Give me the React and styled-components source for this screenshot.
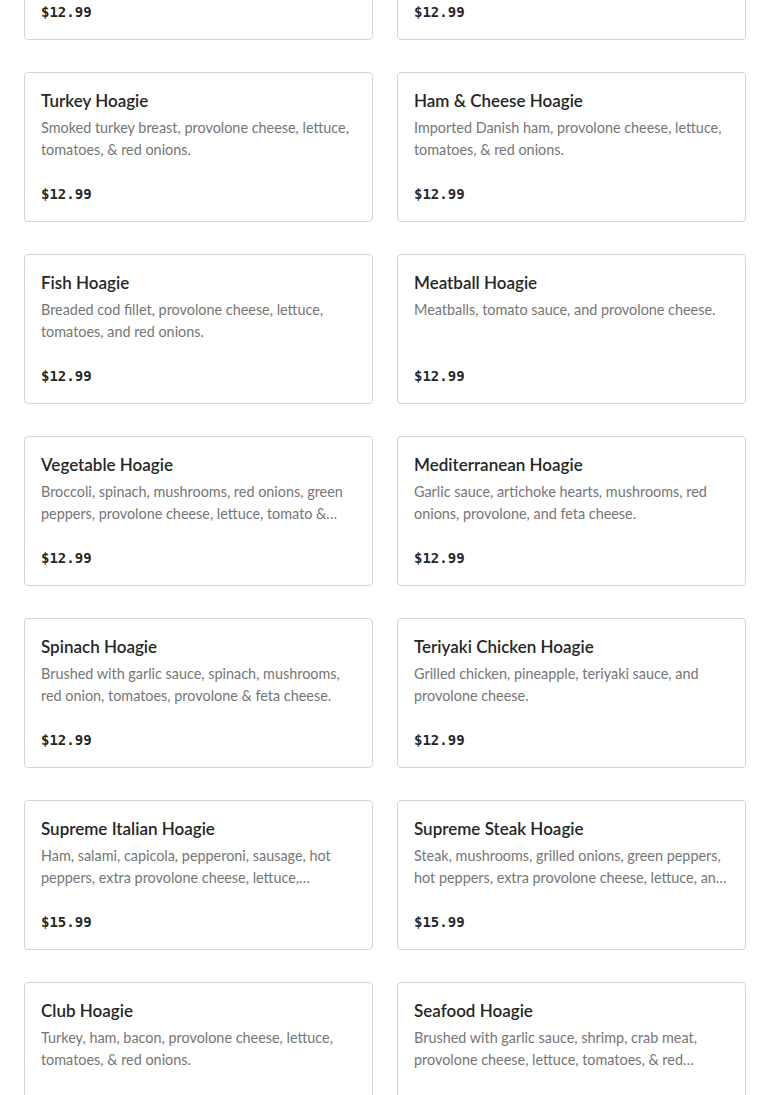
import styled, { createGlobalStyle } from "styled-components";

const GlobalStyle = createGlobalStyle`
  html, body {
    margin: 0;
    padding: 0;
    background: #ffffff;
    overflow: hidden;
  }
  body {
    font-family: Lato, "Noto Sans", sans-serif;
  }
`;

const Page = styled.div`
  width: 770px;
  height: 1095px;
  overflow: hidden;
`;

const MenuGrid = styled.div`
  display: grid;
  grid-template-columns: repeat(2, 349px);
  column-gap: 24px;
  row-gap: 32px;
  padding: 0 24px;
  margin-top: -110px;
`;

const Card = styled.div`
  box-sizing: border-box;
  height: 150px;
  border: 1px solid #d4d4d4;
  border-radius: 4px;
  padding: 16px;
  display: flex;
  flex-direction: column;
  background: #fff;
`;

const Title = styled.div`
  font-size: 17px;
  line-height: 24px;
  font-weight: 600;
  color: #262626;
`;

const Description = styled.div`
  margin-top: 4px;
  font-size: 14.4px;
  line-height: 22px;
  height: 44px;
  color: #767676;
  display: -webkit-box;
  -webkit-line-clamp: 2;
  -webkit-box-orient: vertical;
  overflow: hidden;
`;

const Price = styled.div`
  margin-top: 22px;
  font-family: "DejaVu Sans Mono", "Liberation Mono", monospace;
  font-size: 14px;
  line-height: 22px;
  font-weight: 700;
  color: #262626;
`;

const items = [
  { name: "Italian Hoagie", desc: "Ham, salami, capicola, provolone cheese, lettuce, tomatoes, & red onions.", price: "$12.99" },
  { name: "Cheesesteak Hoagie", desc: "Steak, provolone cheese, lettuce, tomatoes, & red onions.", price: "$12.99" },
  { name: "Turkey Hoagie", desc: "Smoked turkey breast, provolone cheese, lettuce, tomatoes, & red onions.", price: "$12.99" },
  { name: "Ham & Cheese Hoagie", desc: "Imported Danish ham, provolone cheese, lettuce, tomatoes, & red onions.", price: "$12.99" },
  { name: "Fish Hoagie", desc: "Breaded cod fillet, provolone cheese, lettuce, tomatoes, and red onions.", price: "$12.99" },
  { name: "Meatball Hoagie", desc: "Meatballs, tomato sauce, and provolone cheese.", price: "$12.99" },
  { name: "Vegetable Hoagie", desc: "Broccoli, spinach, mushrooms, red onions, green peppers, provolone cheese, lettuce, tomato & onions.", price: "$12.99" },
  { name: "Mediterranean Hoagie", desc: "Garlic sauce, artichoke hearts, mushrooms, red onions, provolone, and feta cheese.", price: "$12.99" },
  { name: "Spinach Hoagie", desc: "Brushed with garlic sauce, spinach, mushrooms, red onion, tomatoes, provolone & feta cheese.", price: "$12.99" },
  { name: "Teriyaki Chicken Hoagie", desc: "Grilled chicken, pineapple, teriyaki sauce, and provolone cheese.", price: "$12.99" },
  { name: "Supreme Italian Hoagie", desc: "Ham, salami, capicola, pepperoni, sausage, hot peppers, extra provolone cheese, lettuce, tomatoes, & red onions.", price: "$15.99" },
  { name: "Supreme Steak Hoagie", desc: "Steak, mushrooms, grilled onions, green peppers, hot peppers, extra provolone cheese, lettuce, and tomatoes.", price: "$15.99" },
  { name: "Club Hoagie", desc: "Turkey, ham, bacon, provolone cheese, lettuce, tomatoes, & red onions.", price: "$12.99" },
  { name: "Seafood Hoagie", desc: "Brushed with garlic sauce, shrimp, crab meat, provolone cheese, lettuce, tomatoes, & red onions.", price: "$15.99" },
];

const App = () => {
  return (
    <Page>
      <GlobalStyle />
      <MenuGrid>
        {items.map((item) => (
          <Card key={item.name}>
            <Title>{item.name}</Title>
            <Description>{item.desc}</Description>
            <Price>{item.price}</Price>
          </Card>
        ))}
      </MenuGrid>
    </Page>
  );
};

export default App;
